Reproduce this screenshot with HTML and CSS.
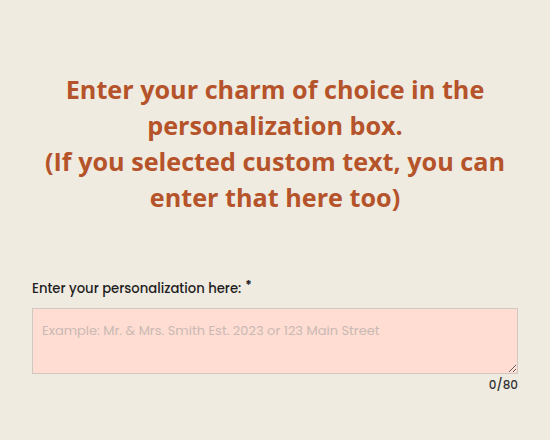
FILE: index.html
```html
<!DOCTYPE html>
<html>
<head>
<meta charset="utf-8">
<link rel="stylesheet" href="styles.css">
</head>
<body>
<main class="page">
  <h1 class="headline">Enter your charm of choice in the personalization box.<br>(If you selected custom text, you can enter that here too)</h1>
  <form class="field">
    <label class="label" for="p">Enter your personalization here:<span class="req">*</span></label>
    <textarea id="p" class="input" placeholder="Example: Mr. &amp; Mrs. Smith Est. 2023 or 123 Main Street"></textarea>
    <div class="count">0/80</div>
  </form>
</main>
</body>
</html>
```
FILE: styles.css
```css
html, body { margin: 0; padding: 0; }
body {
  width: 550px;
  height: 440px;
  background: #efebe1;
  overflow: hidden;
}
.page {
  display: flex;
  flex-direction: column;
  align-items: center;
  padding-top: 71px;
}
.headline {
  margin: 0;
  width: 480px;
  text-align: center;
  font-family: "Open Sans", sans-serif;
  font-weight: 700;
  font-size: 25.2px;
  line-height: 36px;
  color: #b5532a;
}
.field {
  width: 486px;
  margin-top: 64px;
  display: flex;
  flex-direction: column;
  font-family: "Poppins", "Lato", sans-serif;
}
.label {
  font-size: 13.2px;
  font-weight: 500;
  color: #1f1f1f;
  margin-bottom: 9px;
}
.req { font-size: 12px; font-weight: 700; vertical-align: top; margin-left: 4px; line-height: 1; }
.input {
  box-sizing: border-box;
  width: 486px;
  height: 66px;
  margin: 0;
  background: #ffddd2;
  border: 1px solid #cfc9c2;
  padding: 12px 9px;
  font-family: inherit;
  font-size: 13px;
  resize: vertical;
}
.input::placeholder { color: #c9b9b4; }
.count {
  align-self: flex-end;
  font-size: 12px;
  font-weight: 500;
  color: #333;
  margin-top: 2px;
}
```
